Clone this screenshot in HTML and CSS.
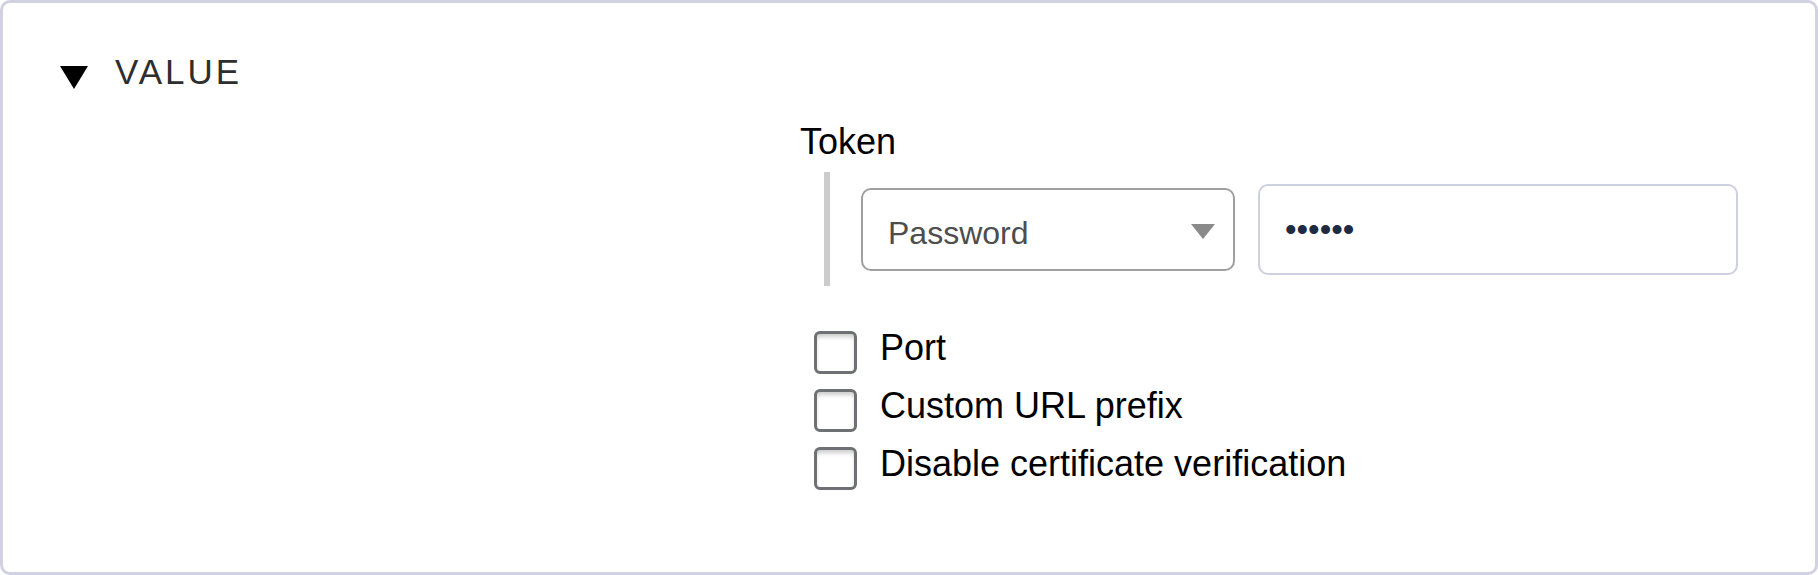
FILE: index.html
```html
<!DOCTYPE html>
<html>
<head>
<meta charset="utf-8">
<link rel="stylesheet" href="styles.css">
</head>
<body>
<div class="panel">
  <div class="header">
    <svg class="caret" width="28" height="23" viewBox="0 0 28 23"><polygon points="0,0 28,0 14,23" fill="#000"/></svg>
    <span class="title">VALUE</span>
  </div>
  <div class="form">
    <div class="field-label">Token</div>
    <div class="field-row">
      <div class="select">
        <span class="select-text">Password</span>
        <svg class="select-arrow" width="24" height="15" viewBox="0 0 24 15"><polygon points="0,0 24,0 12,15" fill="#8a8a8a"/></svg>
      </div>
      <div class="input"><span class="dots">••••••</span></div>
    </div>
    <div class="checks">
      <label class="check"><span class="box"></span><span class="check-text">Port</span></label>
      <label class="check"><span class="box"></span><span class="check-text">Custom URL prefix</span></label>
      <label class="check"><span class="box"></span><span class="check-text">Disable certificate verification</span></label>
    </div>
  </div>
</div>
</body>
</html>
```

FILE: styles.css
```css
html, body {
  margin: 0;
  padding: 0;
  background: #fff;
}
body {
  font-family: "Liberation Sans", Arial, sans-serif;
}
.panel {
  box-sizing: border-box;
  width: 1818px;
  height: 575px;
  border: 3px solid #d0d2e1;
  border-radius: 10px;
  padding: 49px 0 0 57px;
}
.header {
  display: flex;
  align-items: flex-start;
  height: 40px;
}
.caret {
  margin-top: 14px;
  margin-right: 27px;
  flex: none;
}
.title {
  font-size: 35px;
  line-height: 40px;
  letter-spacing: 3px;
  color: #2e2e2e;
}
.form {
  margin: 29px 0 0 740px;
}
.field-label {
  font-size: 36px;
  line-height: 41px;
  color: #000;
}
.field-row {
  margin: 10px 0 0 24px;
  border-left: 6px solid #cccccc;
  padding: 12px 0 11px 31px;
  display: flex;
  align-items: center;
  gap: 23px;
}
.select {
  box-sizing: border-box;
  width: 374px;
  height: 83px;
  border: 2px solid #a0a0a0;
  border-radius: 10px;
  display: flex;
  align-items: center;
  justify-content: space-between;
  padding: 8px 18px 0 25px;
}
.select-text {
  font-size: 32px;
  color: #4d4d4d;
}
.select-arrow {
  margin-top: -4px;
}
.input {
  box-sizing: border-box;
  width: 480px;
  height: 91px;
  border: 2px solid #cdd0de;
  border-radius: 10px;
  display: flex;
  align-items: center;
  padding: 0 25px;
}
.dots {
  font-size: 33px;
  color: #1f2a44;
  margin-top: 1px;
}
.checks {
  margin: 37px 0 0 14px;
  display: flex;
  flex-direction: column;
}
.check {
  display: flex;
  align-items: center;
  gap: 23px;
  height: 58px;
}
.box {
  box-sizing: border-box;
  width: 43px;
  height: 43px;
  border: 3px solid #6f7073;
  border-radius: 6px;
  box-shadow: inset 0 4px 4px -1px rgba(0,0,0,0.2);
  background: #fff;
  flex: none;
}
.check-text {
  font-size: 36px;
  color: #000;
  margin-top: -9px;
}
```
